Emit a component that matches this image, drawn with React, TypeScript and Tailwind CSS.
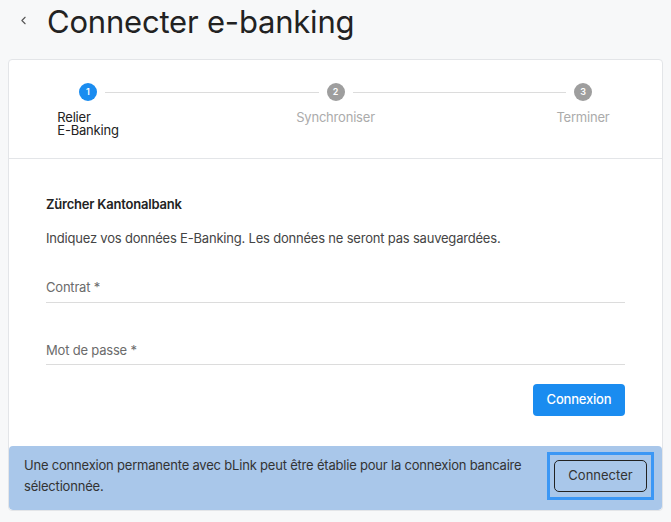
import { ChevronLeft } from "lucide-react";

const steps = [
  { n: 1, label: "Relier\nE-Banking", active: true },
  { n: 2, label: "Synchroniser", active: false },
  { n: 3, label: "Terminer", active: false },
];

const StepDot = ({ n, active }: { n: number; active: boolean }) => (
  <div
    className={`flex h-[18px] w-[18px] shrink-0 items-center justify-center rounded-full text-[9px] font-semibold text-white ${
      active ? "bg-[#1a8cf0]" : "bg-[#9e9e9e]"
    }`}
  >
    {n}
  </div>
);

const Field = ({ label }: { label: string }) => (
  <div className="border-b border-[#dcdcdc] pb-[4px] text-[13px] tracking-[-0.2px] text-[#6b6b6b]">{label}</div>
);

export default function App() {
  return (
    <div className="min-h-screen w-full bg-[#f7f8f9] font-['Inter',sans-serif] text-[#222]">
      {/* Kopfzeile */}
      <div className="flex h-[59px] items-start pt-[4px]">
        <ChevronLeft className="ml-[17px] mt-[10px] h-[13px] w-[13px] text-[#555]" strokeWidth={2} />
        <h1 className="ml-[17px] text-[31px] font-normal leading-[36px] tracking-[-0.2px] text-[#222]">
          Connecter e-banking
        </h1>
      </div>

      <div className="mx-[8px] overflow-hidden rounded-[4px] border border-[#e3e5e8] bg-white">
        {/* Stepper */}
        <div className="border-b border-[#e3e5e8] pb-[21px] pt-[23px]">
          <div className="flex items-center px-[70px]">
            <StepDot n={1} active />
            <div className="mx-[8px] h-px flex-1 bg-[#dcdcdc]" />
            <StepDot n={2} active={false} />
            <div className="mx-[8px] h-px flex-1 bg-[#dcdcdc]" />
            <StepDot n={3} active={false} />
          </div>
          <div className="mt-[10px] flex justify-between px-[29px]">
            {steps.map((s) => (
              <div key={s.n} className="flex w-[100px] justify-center">
                <span
                  className={`inline-block whitespace-pre-line text-left text-[13px] leading-[13px] tracking-[-0.2px] ${
                    s.active ? "text-[#222]" : "text-[#ababab]"
                  }`}
                >
                  {s.label}
                </span>
              </div>
            ))}
          </div>
        </div>

        {/* Formular */}
        <div className="px-[37px] pb-[30px] pt-[36px] tracking-[-0.2px]">
          <div className="text-[13px] font-semibold">Zürcher Kantonalbank</div>
          <p className="mt-[14px] text-[13px] text-[#444]">
            Indiquez vos données E-Banking. Les données ne seront pas sauvegardées.
          </p>
          <div className="mt-[30px]">
            <Field label="Contrat *" />
          </div>
          <div className="mt-[38px]">
            <Field label="Mot de passe *" />
          </div>
          <div className="mt-[19px] flex justify-end">
            <button className="h-[32px] w-[92px] rounded-[4px] bg-[#1a8cf0] text-[13px] font-medium text-white">
              Connexion
            </button>
          </div>
        </div>

        {/* bLink Hinweis */}
        <div className="flex items-center justify-between rounded-[4px] bg-[#a9c7ea] pb-[10px] pl-[15px] pr-[8px] pt-[6px]">
          <p className="w-[510px] text-[13px] leading-[21px] tracking-[-0.2px] text-[#333]">
            Une connexion permanente avec bLink peut être établie pour la connexion bancaire sélectionnée.
          </p>
          <div className="border-[3px] border-[#3b97f5] px-[4px] py-[5px]">
            <button className="h-[32px] w-[93px] rounded-[5px] border border-[#222] text-[13px] text-[#333]">
              Connecter
            </button>
          </div>
        </div>
      </div>
    </div>
  );
}
